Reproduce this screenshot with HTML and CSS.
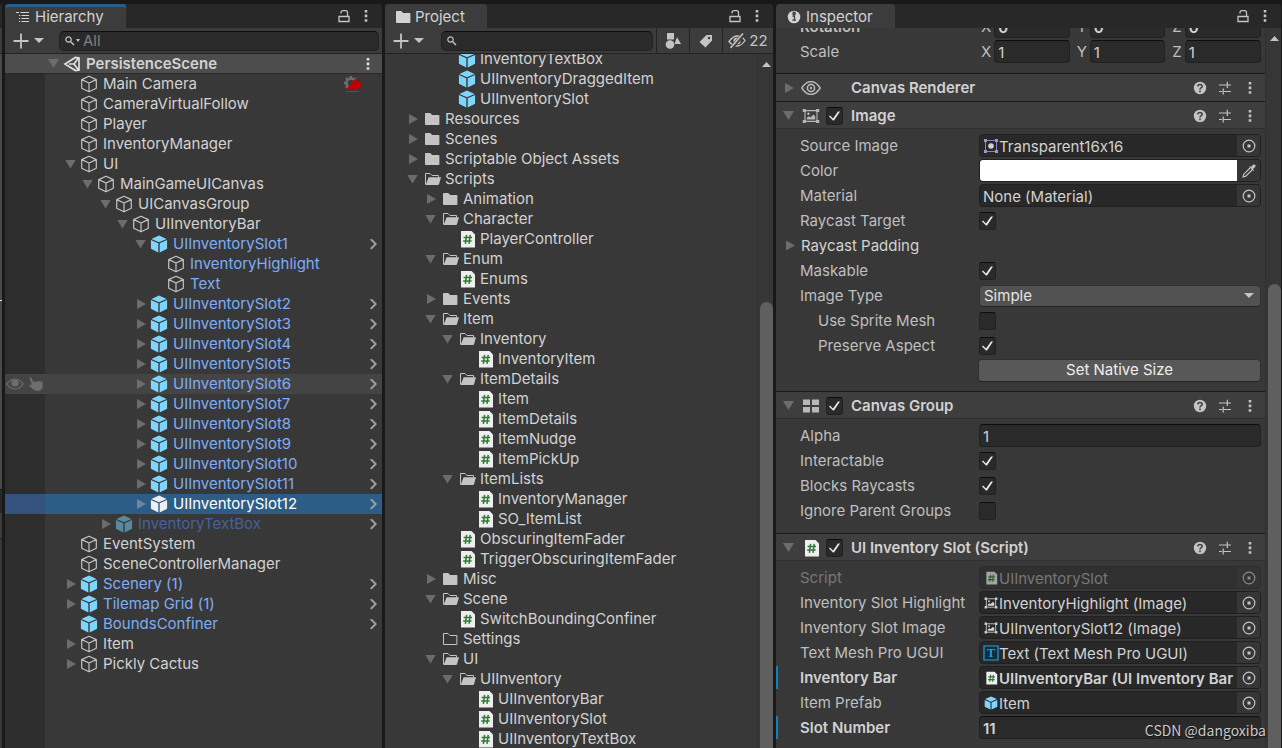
FILE: index.html
```html
<!DOCTYPE html>
<html lang="en">
<head>
<meta charset="utf-8">
<title>PersistenceScene</title>
<link rel="stylesheet" href="styles.css">
</head>
<body>
<svg class="defs" aria-hidden="true">
  <symbol id="cube" viewBox="0 0 18 18"><path d="M9 1.2 16.3 4.6V13.2L9 16.8 1.7 13.2V4.6ZM1.7 4.6 9 8 16.3 4.6M9 8V16.8" fill="none" stroke="currentColor" stroke-width="1.2" stroke-linejoin="round"/></symbol>
  <symbol id="prefab" viewBox="0 0 18 18"><path d="M9 .6 16.6 3.9 9 7.3 1.4 3.9ZM.9 5 8.3 8.3V17.4L.9 13.8ZM17.1 5 9.7 8.3V17.4L17.1 13.8Z" fill="currentColor"/></symbol>
  <symbol id="folder" viewBox="0 0 18 18"><path d="M2 3.8Q2 3 2.8 3H7.2L9.2 5H15.6Q16.4 5 16.4 5.8V14.2Q16.4 15 15.6 15H2.8Q2 15 2 14.2Z" fill="currentColor"/></symbol>
  <symbol id="folder-open" viewBox="0 0 18 18"><path d="M2.5 14.5V3.5H7L9 5.5H15.5V7.5" fill="none" stroke="currentColor"/><path d="M5.6 7.2H18L16 14.2Q15.8 15 15 15H2.6Z" fill="currentColor"/></symbol>
  <symbol id="folder-empty" viewBox="0 0 18 18"><path d="M2.5 14.5V3.5H7L9 5.5H15.9V14.5Z" fill="none" stroke="currentColor"/></symbol>
  <symbol id="script" viewBox="0 0 18 18"><path d="M3 1H13.5L17 4.5V17.4H3Z" fill="#eeeeee"/><path d="M8.6 4.8 7.4 13.8M12.2 4.8 11 13.8M5.6 7.6H14M5.2 11H13.6" fill="none" stroke="#2e7a35" stroke-width="1.5"/></symbol>
  <symbol id="search" viewBox="0 0 12 12"><circle cx="4.500" cy="4.500" r="2.700" fill="none" stroke="currentColor" stroke-width="1.200"/><path d="M6.500 6.500 10 10" stroke="currentColor" stroke-width="1.500"/></symbol>
  <symbol id="lock" viewBox="0 0 12 14"><path d="M1 7.5H11V12.5H1ZM3 4.6V3.8Q3 1.7 5 1.7H7.6Q9.5 1.7 9.5 3.8V7.5" fill="none" stroke="currentColor" stroke-width="1.3"/></symbol>
  <symbol id="dots" viewBox="0 0 4 14"><path d="M.7 1H3.3V3.6H.7ZM.7 5.6H3.3V8.2H.7ZM.7 10.2H3.3V12.8H.7Z" fill="currentColor"/></symbol>
  <symbol id="plus" viewBox="0 0 16 16"><path d="M8 .5V15.5M.5 8H15.5" stroke="currentColor" stroke-width="1.8"/></symbol>
  <symbol id="eye" viewBox="0 0 20 14"><path d="M.8 7Q5 .5 10 .5T19.2 7Q15 13.500 10 13.500T.8 7Z" fill="none" stroke="currentColor" stroke-width="1.4"/><circle cx="10" cy="7" r="3.6" fill="none" stroke="currentColor" stroke-width="1.6"/><circle cx="10" cy="7" r="1.2" fill="currentColor"/></symbol>
  <symbol id="eye-full" viewBox="0 0 18 12"><path d="M.7 6Q4.5 1 9 1T17.3 6Q13.500 11 9 11T.7 6Z" fill="none" stroke="currentColor" stroke-width="1.2"/><circle cx="9" cy="5" r="3.6" fill="currentColor"/></symbol>
  <symbol id="hand" viewBox="0 0 16 16"><path d="M1.200 1.400Q2.400.6 3.200 2L6 6.400 7.500 5 9 6 10.500 4.800 12 5.800 13.600 5 14.600 6.400V11.500L12 14.700H7.500L4.800 13 1 9.500Q1.500 8.200 3.200 8.600L4.200 9Z" fill="currentColor"/></symbol>
  <symbol id="image" viewBox="0 0 18 16"><path d="M3 2.600H15V13.400H3Z" fill="none" stroke="currentColor" stroke-width="1.100"/><path d="M.8 1H3.800V4H.8ZM14.200 1H17.200V4H14.200ZM.8 12H3.800V15H.8ZM14.200 12H17.200V15H14.200ZM4.800 11.400V9.800L7 8.200 8.500 9.400 11.500 6.400 13.200 8.400V11.400Z" fill="currentColor"/><circle cx="6.400" cy="5.800" r="1.200" fill="currentColor"/></symbol>
  <symbol id="help" viewBox="0 0 14 14"><circle cx="7" cy="7" r="6.200" fill="currentColor"/><path d="M4.800 5.400Q4.900 3.500 7 3.500T9.200 5.300Q9.200 6.300 8 6.900 7 7.400 7 8.500M7 9.600V11.200" fill="none" stroke="#3e3e3e" stroke-width="1.600"/></symbol>
  <symbol id="sliders" viewBox="0 0 14 14"><path d="M1 4H8M8 4H13M9.300.8V7M1 10.500H4M5.200 10.500H13M5.200 7.500V13.500" fill="none" stroke="currentColor" stroke-width="1.200"/></symbol>
  <symbol id="target" viewBox="0 0 14 14"><circle cx="7" cy="7" r="5.800" fill="none" stroke="currentColor" stroke-width="1.200"/><path d="M5.500 5.500H8.500V8.500H5.500Z" fill="currentColor"/></symbol>
</svg>

<div class="editor">
  <div class="strip" aria-hidden="true"><i class="strip-tab"></i><i class="strip-bar"></i><i class="strip-view"></i><i class="strip-line"></i><i class="strip-view grow"></i><i class="strip-tab split"></i><i class="strip-bar"></i><i class="strip-rest"></i></div>

  <section class="panel">
    <header class="tabs">
      <button class="tab active"><svg class="i16" viewBox="0 0 16 16"><path d="M1 3.500H4M5.500 3.500H14M6.500 6.500H14M6.500 9.500H14M6.500 12.500H14M4 6.500H5.200M4 9.500H5.200M4 12.500H5.200" stroke="currentColor"/></svg>Hierarchy</button>
      <button class="ic" aria-label="Lock"><svg class="lock"><use href="#lock"/></svg></button>
      <button class="ic" aria-label="Menu"><svg class="dots"><use href="#dots"/></svg></button>
    </header>
    <div class="toolbar">
      <button class="add" aria-label="Add"><svg class="i16"><use href="#plus"/></svg><i class="caret"></i></button>
      <label class="search"><svg class="i12"><use href="#search"/></svg><i class="caret small"></i><input type="text" placeholder="All" aria-label="Search hierarchy"></label>
    </div>
    <ul class="tree hier">
      <li class="scene l0"><button class="fold open" aria-label="Fold"></button><svg class="i18" viewBox="0 0 18 18"><path d="M2 9 12.500 2.500 16 3V15L12.500 15.500ZM6 9H11L15 3.500M11 9 15 14.500" fill="none" stroke="currentColor" stroke-width="1.700"/></svg><b>PersistenceScene</b><button class="ic end" aria-label="Scene menu"><svg class="dots"><use href="#dots"/></svg></button></li>
      <li class="l1 leaf"><svg class="i18"><use href="#cube"/></svg>Main Camera<svg class="brain" viewBox="0 0 20 18"><circle cx="8" cy="8" r="4.500" fill="none" stroke="#6e6e6e" stroke-width="2.500"/><path d="M8 1V4M1 8H4M3 3 5 5M3 13 5 11M11 5 13 3" stroke="#6e6e6e" stroke-width="2.400"/><path d="M2.500 15 12.500 3.500 15 4V8L18 6.500V12.500L15.500 11.500V15Z" fill="#c00000"/><path d="M3 16.500H15.500" stroke="#6a4a4a"/></svg></li>
      <li class="l1 leaf"><svg class="i18"><use href="#cube"/></svg>CameraVirtualFollow</li>
      <li class="l1 leaf"><svg class="i18"><use href="#cube"/></svg>Player</li>
      <li class="l1 leaf"><svg class="i18"><use href="#cube"/></svg>InventoryManager</li>
      <li class="l1"><button class="fold open" aria-label="Fold"></button><svg class="i18"><use href="#cube"/></svg>UI</li>
      <li class="l2"><button class="fold open" aria-label="Fold"></button><svg class="i18"><use href="#cube"/></svg>MainGameUICanvas</li>
      <li class="l3"><button class="fold open" aria-label="Fold"></button><svg class="i18"><use href="#cube"/></svg>UICanvasGroup</li>
      <li class="l4"><button class="fold open" aria-label="Fold"></button><svg class="i18"><use href="#cube"/></svg>UIInventoryBar</li>
      <li class="l5 pf"><button class="fold open" aria-label="Fold"></button><svg class="i18"><use href="#prefab"/></svg>UIInventorySlot1<button class="go" aria-label="Open prefab"></button></li>
      <li class="l6 leaf child"><svg class="i18"><use href="#cube"/></svg>InventoryHighlight</li>
      <li class="l6 leaf child"><svg class="i18"><use href="#cube"/></svg>Text</li>
      <li class="l5 pf"><button class="fold" aria-label="Unfold"></button><svg class="i18"><use href="#prefab"/></svg>UIInventorySlot2<button class="go" aria-label="Open prefab"></button></li>
      <li class="l5 pf"><button class="fold" aria-label="Unfold"></button><svg class="i18"><use href="#prefab"/></svg>UIInventorySlot3<button class="go" aria-label="Open prefab"></button></li>
      <li class="l5 pf"><button class="fold" aria-label="Unfold"></button><svg class="i18"><use href="#prefab"/></svg>UIInventorySlot4<button class="go" aria-label="Open prefab"></button></li>
      <li class="l5 pf"><button class="fold" aria-label="Unfold"></button><svg class="i18"><use href="#prefab"/></svg>UIInventorySlot5<button class="go" aria-label="Open prefab"></button></li>
      <li class="l5 pf hover"><span class="vis"><svg class="eye-s"><use href="#eye-full"/></svg><svg class="i16"><use href="#hand"/></svg></span><button class="fold" aria-label="Unfold"></button><svg class="i18"><use href="#prefab"/></svg>UIInventorySlot6<button class="go" aria-label="Open prefab"></button></li>
      <li class="l5 pf"><button class="fold" aria-label="Unfold"></button><svg class="i18"><use href="#prefab"/></svg>UIInventorySlot7<button class="go" aria-label="Open prefab"></button></li>
      <li class="l5 pf"><button class="fold" aria-label="Unfold"></button><svg class="i18"><use href="#prefab"/></svg>UIInventorySlot8<button class="go" aria-label="Open prefab"></button></li>
      <li class="l5 pf"><button class="fold" aria-label="Unfold"></button><svg class="i18"><use href="#prefab"/></svg>UIInventorySlot9<button class="go" aria-label="Open prefab"></button></li>
      <li class="l5 pf"><button class="fold" aria-label="Unfold"></button><svg class="i18"><use href="#prefab"/></svg>UIInventorySlot10<button class="go" aria-label="Open prefab"></button></li>
      <li class="l5 pf"><button class="fold" aria-label="Unfold"></button><svg class="i18"><use href="#prefab"/></svg>UIInventorySlot11<button class="go" aria-label="Open prefab"></button></li>
      <li class="l5 pf selected"><button class="fold" aria-label="Unfold"></button><svg class="i18"><use href="#prefab"/></svg>UIInventorySlot12<button class="go" aria-label="Open prefab"></button></li>
      <li class="l3 pf inactive"><button class="fold" aria-label="Unfold"></button><svg class="i18"><use href="#prefab"/></svg>InventoryTextBox<button class="go" aria-label="Open prefab"></button></li>
      <li class="l1 leaf"><svg class="i18"><use href="#cube"/></svg>EventSystem</li>
      <li class="l1 leaf"><svg class="i18"><use href="#cube"/></svg>SceneControllerManager</li>
      <li class="l1 pf"><button class="fold" aria-label="Unfold"></button><svg class="i18"><use href="#prefab"/></svg>Scenery (1)<button class="go" aria-label="Open prefab"></button></li>
      <li class="l1 pf"><button class="fold" aria-label="Unfold"></button><svg class="i18"><use href="#prefab"/></svg>Tilemap Grid (1)<button class="go" aria-label="Open prefab"></button></li>
      <li class="l1 leaf pf"><svg class="i18"><use href="#prefab"/></svg>BoundsConfiner<button class="go" aria-label="Open prefab"></button></li>
      <li class="l1"><button class="fold" aria-label="Unfold"></button><svg class="i18"><use href="#cube"/></svg>Item</li>
      <li class="l1"><button class="fold" aria-label="Unfold"></button><svg class="i18"><use href="#cube"/></svg>Pickly Cactus</li>
    </ul>
  </section>

  <section class="panel">
    <header class="tabs">
      <button class="tab"><svg class="i16" viewBox="1 1 16 16"><use href="#folder" width="18" height="18"/></svg>Project</button>
      <button class="ic" aria-label="Lock"><svg class="lock"><use href="#lock"/></svg></button>
      <button class="ic" aria-label="Menu"><svg class="dots"><use href="#dots"/></svg></button>
    </header>
    <div class="toolbar project-bar">
      <button class="add" aria-label="Add"><svg class="i16"><use href="#plus"/></svg><i class="caret"></i></button>
      <label class="search"><svg class="i12"><use href="#search"/></svg><input type="text" aria-label="Search project"></label>
      <button class="filter" aria-label="Search by type"><svg class="i16" viewBox="0 0 16 16"><path d="M2 0H9V6.500H2ZM12 4 16 11H9.500Z" fill="currentColor"/><circle cx="5" cy="11.500" r="4.300" fill="currentColor"/></svg></button>
      <button class="filter" aria-label="Search by label"><svg class="i16" viewBox="0 0 16 16"><path d="M8.500 2H14V7.500L7.500 14.500 1.500 9Z" fill="currentColor"/><circle cx="11" cy="5" r="1.200" fill="#3c3c3c"/></svg></button>
      <button class="filter count"><svg class="i18" viewBox="0 0 18 18"><path d="M1 9.500Q5 4 9.500 4T17 8.500Q13.500 14 9 14T1 9.500Z" fill="none" stroke="currentColor" stroke-width="1.300"/><circle cx="9" cy="9" r="3.500" fill="currentColor"/><path d="M3 16.500 15.500 2" stroke="#3c3c3c" stroke-width="4"/><path d="M2.500 16 15 1.500" stroke="currentColor" stroke-width="1.600"/></svg>22</button>
    </div>
    <div class="scroller">
      <ul class="tree proj">
        <li class="l3 leaf asset"><svg class="i18"><use href="#prefab"/></svg>InventoryTextBox</li>
        <li class="l3 leaf asset"><svg class="i18"><use href="#prefab"/></svg>UIInventoryDraggedItem</li>
        <li class="l3 leaf asset"><svg class="i18"><use href="#prefab"/></svg>UIInventorySlot</li>
        <li class="l1"><button class="fold" aria-label="Unfold"></button><svg class="i18"><use href="#folder"/></svg>Resources</li>
        <li class="l1"><button class="fold" aria-label="Unfold"></button><svg class="i18"><use href="#folder"/></svg>Scenes</li>
        <li class="l1"><button class="fold" aria-label="Unfold"></button><svg class="i18"><use href="#folder"/></svg>Scriptable Object Assets</li>
        <li class="l1"><button class="fold open" aria-label="Fold"></button><svg class="i18"><use href="#folder-open"/></svg>Scripts</li>
        <li class="l2"><button class="fold" aria-label="Unfold"></button><svg class="i18"><use href="#folder"/></svg>Animation</li>
        <li class="l2"><button class="fold open" aria-label="Fold"></button><svg class="i18"><use href="#folder-open"/></svg>Character</li>
        <li class="l3 leaf"><svg class="i18"><use href="#script"/></svg>PlayerController</li>
        <li class="l2"><button class="fold open" aria-label="Fold"></button><svg class="i18"><use href="#folder-open"/></svg>Enum</li>
        <li class="l3 leaf"><svg class="i18"><use href="#script"/></svg>Enums</li>
        <li class="l2"><button class="fold" aria-label="Unfold"></button><svg class="i18"><use href="#folder"/></svg>Events</li>
        <li class="l2"><button class="fold open" aria-label="Fold"></button><svg class="i18"><use href="#folder-open"/></svg>Item</li>
        <li class="l3"><button class="fold open" aria-label="Fold"></button><svg class="i18"><use href="#folder-open"/></svg>Inventory</li>
        <li class="l4 leaf"><svg class="i18"><use href="#script"/></svg>InventoryItem</li>
        <li class="l3"><button class="fold open" aria-label="Fold"></button><svg class="i18"><use href="#folder-open"/></svg>ItemDetails</li>
        <li class="l4 leaf"><svg class="i18"><use href="#script"/></svg>Item</li>
        <li class="l4 leaf"><svg class="i18"><use href="#script"/></svg>ItemDetails</li>
        <li class="l4 leaf"><svg class="i18"><use href="#script"/></svg>ItemNudge</li>
        <li class="l4 leaf"><svg class="i18"><use href="#script"/></svg>ItemPickUp</li>
        <li class="l3"><button class="fold open" aria-label="Fold"></button><svg class="i18"><use href="#folder-open"/></svg>ItemLists</li>
        <li class="l4 leaf"><svg class="i18"><use href="#script"/></svg>InventoryManager</li>
        <li class="l4 leaf"><svg class="i18"><use href="#script"/></svg>SO_ItemList</li>
        <li class="l3 leaf"><svg class="i18"><use href="#script"/></svg>ObscuringItemFader</li>
        <li class="l3 leaf"><svg class="i18"><use href="#script"/></svg>TriggerObscuringItemFader</li>
        <li class="l2"><button class="fold" aria-label="Unfold"></button><svg class="i18"><use href="#folder"/></svg>Misc</li>
        <li class="l2"><button class="fold open" aria-label="Fold"></button><svg class="i18"><use href="#folder-open"/></svg>Scene</li>
        <li class="l3 leaf"><svg class="i18"><use href="#script"/></svg>SwitchBoundingConfiner</li>
        <li class="l2 leaf"><svg class="i18"><use href="#folder-empty"/></svg>Settings</li>
        <li class="l2"><button class="fold open" aria-label="Fold"></button><svg class="i18"><use href="#folder-open"/></svg>UI</li>
        <li class="l3"><button class="fold open" aria-label="Fold"></button><svg class="i18"><use href="#folder-open"/></svg>UIInventory</li>
        <li class="l4 leaf"><svg class="i18"><use href="#script"/></svg>UIInventoryBar</li>
        <li class="l4 leaf"><svg class="i18"><use href="#script"/></svg>UIInventorySlot</li>
        <li class="l4 leaf"><svg class="i18"><use href="#script"/></svg>UIInventoryTextBox</li>
      </ul>
      <div class="bar"><i class="up"></i><i class="thumb"></i></div>
    </div>
  </section>

  <section class="panel inspector">
    <header class="tabs">
      <button class="tab"><svg class="i16" viewBox="0 0 16 16"><circle cx="8" cy="8" r="6.300" fill="currentColor"/><path d="M6.500 7H8.500V11M6.300 11.200H10M7.200 3.500H9V5.300H7.200Z" fill="none" stroke="#3c3c3c" stroke-width="1.300"/></svg>Inspector</button>
      <button class="ic" aria-label="Lock"><svg class="lock"><use href="#lock"/></svg></button>
      <button class="ic" aria-label="Menu"><svg class="dots"><use href="#dots"/></svg></button>
    </header>
    <div class="scroller">
      <div class="components">
        <div class="fields transform">
          <div class="field"><b>Rotation</b><div class="vec"><label>X<input type="text" class="strong" value="0"></label><label>Y<input type="text" class="strong" value="0"></label><label>Z<input type="text" class="strong" value="0"></label></div></div>
          <div class="field"><span>Scale</span><div class="vec"><label>X<input type="text" value="1"></label><label>Y<input type="text" value="1"></label><label>Z<input type="text" value="1"></label></div></div>
        </div>

        <div class="head plain"><button class="fold" aria-label="Unfold"></button><svg class="eye-l"><use href="#eye"/></svg><h2 class="no-check">Canvas Renderer</h2><button class="ic" aria-label="Help"><svg class="i14"><use href="#help"/></svg></button><button class="ic" aria-label="Presets"><svg class="i14"><use href="#sliders"/></svg></button><button class="ic" aria-label="Menu"><svg class="dots"><use href="#dots"/></svg></button></div>

        <div class="head"><button class="fold open" aria-label="Fold"></button><svg class="i18"><use href="#image"/></svg><input type="checkbox" id="c-image" checked><h2><label for="c-image">Image</label></h2><button class="ic" aria-label="Help"><svg class="i14"><use href="#help"/></svg></button><button class="ic" aria-label="Presets"><svg class="i14"><use href="#sliders"/></svg></button><button class="ic" aria-label="Menu"><svg class="dots"><use href="#dots"/></svg></button></div>
        <div class="fields image">
          <div class="field"><span>Source Image</span><div class="object"><svg class="i16" viewBox="0 0 16 16"><path d="M2.500 2.500H13.500V13.500H2.500Z" fill="none" stroke="#8f7cc8"/><path d="M1 1H4V4H1ZM12 1H15V4H12ZM1 12H4V15H1ZM12 12H15V15H12Z" fill="#a48fe0"/><circle cx="8" cy="8" r="2.800" fill="#d0d0d0"/></svg><span>Transparent16x16</span><button aria-label="Pick"><svg class="i14"><use href="#target"/></svg></button></div></div>
          <div class="field"><label for="f-color">Color</label><div class="object swatch"><input type="color" id="f-color" value="#ffffff"><button aria-label="Pick color"><svg class="i14" viewBox="0 0 14 14"><path d="M8 4 1.800 10.200 1 13 3.800 12.200 10 6" fill="none" stroke="currentColor" stroke-width="1.200"/><path d="M7 2.500 8.200 2.200 9 3 11 .8Q12.500 0 13.300 1T13 3.200L11 5 11.800 6 11.200 7.200Z" fill="currentColor"/></svg></button></div></div>
          <div class="field"><span>Material</span><div class="object"><span>None (Material)</span><button aria-label="Pick"><svg class="i14"><use href="#target"/></svg></button></div></div>
          <div class="field"><label for="f-ray">Raycast Target</label><input type="checkbox" id="f-ray" checked></div>
          <div class="field foldable"><button class="fold" aria-label="Unfold"></button><span>Raycast Padding</span></div>
          <div class="field"><label for="f-mask">Maskable</label><input type="checkbox" id="f-mask" checked></div>
          <div class="field"><label for="f-type">Image Type</label><div class="select"><select id="f-type"><option>Simple</option></select></div></div>
          <div class="field sub"><label for="f-mesh">Use Sprite Mesh</label><input type="checkbox" id="f-mesh"></div>
          <div class="field sub"><label for="f-aspect">Preserve Aspect</label><input type="checkbox" id="f-aspect" checked></div>
          <div class="field"><span></span><button class="push">Set Native Size</button></div>
        </div>

        <div class="head"><button class="fold open" aria-label="Fold"></button><svg class="i18" viewBox="0 0 18 18"><path d="M1 2.500H8V8H1ZM10 2.500H17V8H10ZM1 10H8V15.500H1ZM10 10H17V15.500H10Z" fill="currentColor"/></svg><input type="checkbox" id="c-group" checked><h2><label for="c-group">Canvas Group</label></h2><button class="ic" aria-label="Help"><svg class="i14"><use href="#help"/></svg></button><button class="ic" aria-label="Presets"><svg class="i14"><use href="#sliders"/></svg></button><button class="ic" aria-label="Menu"><svg class="dots"><use href="#dots"/></svg></button></div>
        <div class="fields">
          <div class="field"><label for="f-alpha">Alpha</label><input type="text" id="f-alpha" value="1"></div>
          <div class="field"><label for="f-inter">Interactable</label><input type="checkbox" id="f-inter" checked></div>
          <div class="field"><label for="f-block">Blocks Raycasts</label><input type="checkbox" id="f-block" checked></div>
          <div class="field"><label for="f-ignore">Ignore Parent Groups</label><input type="checkbox" id="f-ignore"></div>
        </div>

        <div class="head"><button class="fold open" aria-label="Fold"></button><svg class="i18"><use href="#script"/></svg><input type="checkbox" id="c-slot" checked><h2><label for="c-slot">UI Inventory Slot (Script)</label></h2><button class="ic" aria-label="Help"><svg class="i14"><use href="#help"/></svg></button><button class="ic" aria-label="Presets"><svg class="i14"><use href="#sliders"/></svg></button><button class="ic" aria-label="Menu"><svg class="dots"><use href="#dots"/></svg></button></div>
        <div class="fields">
          <div class="field disabled"><span>Script</span><div class="object"><svg class="i14"><use href="#script"/></svg><span>UIInventorySlot</span><button disabled aria-label="Pick"><svg class="i14"><use href="#target"/></svg></button></div></div>
          <div class="field"><span>Inventory Slot Highlight</span><div class="object"><svg class="i14"><use href="#image"/></svg><span>InventoryHighlight (Image)</span><button aria-label="Pick"><svg class="i14"><use href="#target"/></svg></button></div></div>
          <div class="field"><span>Inventory Slot Image</span><div class="object"><svg class="i14"><use href="#image"/></svg><span>UIInventorySlot12 (Image)</span><button aria-label="Pick"><svg class="i14"><use href="#target"/></svg></button></div></div>
          <div class="field"><span>Text Mesh Pro UGUI</span><div class="object"><svg class="i16" viewBox="0 0 16 16"><path d="M1 1H15V15H1Z" fill="#1c2a33" stroke="#12a5ec" stroke-width="1.200"/><text x="8" y="12" text-anchor="middle" class="tmp">T</text></svg><span>Text (Text Mesh Pro UGUI)</span><button aria-label="Pick"><svg class="i14"><use href="#target"/></svg></button></div></div>
          <div class="field changed"><b>Inventory Bar</b><div class="object"><svg class="i14"><use href="#script"/></svg><b>UIInventoryBar (UI Inventory Bar</b><button aria-label="Pick"><svg class="i14"><use href="#target"/></svg></button></div></div>
          <div class="field"><span>Item Prefab</span><div class="object"><svg class="i14 blue"><use href="#prefab"/></svg><span>Item</span><button aria-label="Pick"><svg class="i14"><use href="#target"/></svg></button></div></div>
          <div class="field changed"><label for="f-slot"><b>Slot Number</b></label><input type="text" class="strong" id="f-slot" value="11"></div>
        </div>
      </div>
      <div class="bar"><i class="up"></i><i class="thumb"></i></div>
    </div>
  </section>
</div>
<div class="watermark">CSDN @dangoxiba</div>
</body>
</html>
```

FILE: styles.css
```css
* { box-sizing: border-box; }

body {
  margin: 0;
  height: 100vh;
  overflow: hidden;
  background: #191919;
  color: #d2d2d2;
  font: 15px/20px Inter, "Liberation Sans", sans-serif;
  font-feature-settings: "calt" 0;
}

button, input, select {
  margin: 0;
  padding: 0;
  border: 0;
  background: none;
  color: inherit;
  font: inherit;
}

svg { flex: none; display: block; overflow: visible; }
i { display: block; flex: none; }
b { font-weight: 600; }
ul { margin: 0; padding: 0; list-style: none; }

.defs { position: absolute; width: 0; height: 0; }
.i12 { width: 12px; height: 12px; }
.i14 { width: 14px; height: 14px; }
.i16 { width: 16px; height: 16px; }
.i18 { width: 18px; height: 18px; }
.lock { width: 12px; height: 14px; }
.dots { width: 4px; height: 14px; }
.eye-s { width: 18px; height: 12px; }
.eye-l { width: 20px; height: 14px; }

.editor {
  display: grid;
  grid-template-columns: 2px minmax(0, 377fr) minmax(0, 388fr) minmax(0, 506fr);
  column-gap: 3px;
  height: 100vh;
  padding-top: 4px;
}

/* Edge of the neighbouring view */
.strip { display: flex; flex-direction: column; }
.strip-tab { height: 24px; background: #282828; }
.strip-tab.split { border-top: 1px solid #191919; }
.strip-bar { height: 26px; background: #3c3c3c; border-bottom: 1px solid #232323; }
.strip-view { height: 246px; background: #494949; }
.strip-view.grow { height: 188px; }
.strip-line { height: 1px; background: #fff; }
.strip-rest { flex: 1; background: #383838; }

.panel {
  display: flex;
  flex-direction: column;
  min-width: 0;
  min-height: 0;
  overflow: hidden;
  background: #383838;
  border-radius: 4px 4px 0 0;
}

.tabs { display: flex; align-items: center; flex: none; height: 24px; padding-right: 5px; background: #282828; }
.tab {
  display: flex;
  align-items: center;
  gap: 4px;
  align-self: stretch;
  margin-right: auto;
  padding: 2px 22px 0 10px;
  background: #3c3c3c;
  border-radius: 3px 3px 0 0;
}
.tab.active { box-shadow: inset 0 3px #2c5d87; }
.ic { display: flex; align-items: center; justify-content: center; width: 24px; color: #c4c4c4; }
.tabs .ic { width: 22px; }

.toolbar {
  display: flex;
  align-items: center;
  flex: none;
  height: 26px;
  padding: 0 3px 0 8px;
  background: #3c3c3c;
  border-bottom: 1px solid #232323;
}
.project-bar { padding-right: 0; }
.add { display: flex; align-items: center; gap: 5px; width: 46px; color: #c4c4c4; }
.caret { width: 10px; height: 5px; background: #c4c4c4; clip-path: polygon(0 0, 100% 0, 50% 100%); }
.caret.small { width: 4px; height: 3px; }
.search {
  display: flex;
  align-items: center;
  flex: 1;
  min-width: 0;
  height: 20px;
  padding-left: 4px;
  color: #c4c4c4;
  background: #2a2a2a;
  border: 1px solid #212121;
  border-top-color: #0d0d0d;
  border-radius: 5px;
}
.project-bar .search { margin: 0 3px 0 2px; }
.search input { flex: 1; min-width: 0; margin-left: 3px; }
.search input::placeholder { color: #7f7f7f; opacity: 1; }
.filter {
  display: flex;
  align-items: center;
  justify-content: center;
  gap: 3px;
  align-self: stretch;
  width: 33px;
  border-left: 1px solid #232323;
  color: #c4c4c4;
}
.filter.count { width: 51px; }

/* Trees */
.tree li { display: flex; align-items: center; height: 20px; white-space: nowrap; }
.tree svg { color: #c4c4c4; }
.fold { flex: none; width: 9px; height: 10px; margin: 0 3px 0 2px; background: #6c6c6c; clip-path: polygon(0 0, 100% 50%, 0 100%); }
.fold.open { width: 11px; height: 9px; margin: 0 3px 0 0; clip-path: polygon(0 0, 100% 0, 50% 100%); }

.hier { flex: 1; background: linear-gradient(90deg, #2d2d2d 40px, #383838 40px); }
.hier .i18 { margin: 0 5px 0 1px; }
.hier .l0 { padding-left: 43px; }
.hier .l1 { padding-left: 60px; }
.hier .l2 { padding-left: 77px; }
.hier .l3 { padding-left: 95px; }
.hier .l4 { padding-left: 112px; }
.hier .l5 { padding-left: 130px; }
.hier .l6 { padding-left: 147px; }
.tree .leaf::before { content: ""; width: 14px; }
.hier .scene { background: #4d4d4d; border-bottom: 1px solid #2a2a2a; }
.scene svg { color: #e0e0e0; }
.end { margin-left: auto; margin-right: 2px; }
.hier .brain { width: 20px; height: 18px; margin-left: auto; margin-right: 19px; }
.pf, .child { color: #7fadf5; }
.pf svg { color: #7fd6fd; }
.hover { position: relative; background: #444444; }
.vis { position: absolute; left: 1px; display: flex; align-items: center; gap: 4px; }
.hover .vis svg { margin: 0; color: #6e6e6e; }
.selected { background: linear-gradient(90deg, #34527d 40px, #2c5d87 40px); color: #fff; }
.selected svg { color: #f0eff0; }
.selected .fold { background: #6a86a4; }
.inactive { color: #46629a; }
.inactive svg { color: #588a9f; }
.go { width: 7px; height: 11px; margin-left: auto; margin-right: 5px; background: #a0a0a0; clip-path: polygon(0 12%, 22% 0, 100% 50%, 22% 100%, 0 88%, 62% 50%); }

.scroller { display: flex; flex: 1; min-height: 0; overflow: hidden; }
.proj { flex: 1; min-width: 0; margin-top: -5px; }
.proj .i18 { margin-left: 2px; margin-right: 4px; }
.proj .l1 { padding-left: 22px; }
.proj .l2 { padding-left: 40px; }
.proj .l3 { padding-left: 57px; }
.proj .l4 { padding-left: 75px; }
.proj .l3.leaf svg, .proj .l4.leaf svg { margin-left: 2px; }
.proj .asset svg { color: #7fd6fd; }

.bar { display: flex; flex-direction: column; flex: none; align-items: flex-end; width: 16px; background: #363636; border-left: 1px solid #2f2f2f; }
.up { width: 9px; height: 5px; margin: 8px 2px 0 0; background: #c4c4c4; clip-path: polygon(50% 0, 100% 100%, 0 100%); }
.thumb { flex: 1; width: 13px; margin-top: 235px; background: #5f5f5f; border-radius: 7px 7px 0 0; }

/* Inspector */
.inspector { border-right: 1px solid #191919; }
.inspector .thumb { margin-top: 243px; }
.components { flex: 1; min-width: 0; }
.head {
  display: flex;
  align-items: center;
  height: 28px;
  padding: 1px 3px 0 7px;
  background: #3e3e3e;
  border-top: 1px solid #1a1a1a;
  border-bottom: 1px solid #303030;
}
.head.plain { border-bottom: 0; }
.head > svg { margin-left: 5px; color: #b8b8b8; }
.head .eye-l { margin-left: 4px; margin-right: -1px; }
.head input { margin-left: 6px; }
.head .ic { width: 25px; }
.head h2 { flex: 1; margin: 0 0 0 8px; font-size: 15px; font-weight: 600; white-space: nowrap; }
.head h2.no-check { margin-left: 31px; }

.fields { display: flex; flex-direction: column; gap: 2px; padding: 5px 4px 11px 0; }
.fields.image { padding-bottom: 9px; }
.transform { margin-top: -18px; padding-bottom: 10px; }
.field {
  display: grid;
  grid-template-columns: minmax(0, 178fr) minmax(0, 282fr);
  column-gap: 1px;
  align-items: center;
  height: 23px;
  padding-left: 24px;
  color: #bfbfbf;
  white-space: nowrap;
}
.field.sub > label { padding-left: 18px; }
.field.foldable { display: flex; padding-left: 8px; color: #d2d2d2; }
.foldable .fold { margin-right: 5px; }
.field.changed { padding-left: 22px; border-left: 2px solid #1080c0; color: #d0d0d0; }
.field.disabled { color: #777; }

input[type="text"] { color: #d2d2d2; }
.field input[type="text"] {
  width: 100%;
  height: 23px;
  min-width: 0;
  padding: 1px 3px 0;
  background: #2a2a2a;
  border: 1px solid #212121;
  border-top-color: #0d0d0d;
  border-radius: 4px;
}
.field input.strong { font-weight: 600; }
.vec { display: flex; gap: 7px; padding-left: 2px; }
.vec label { display: flex; align-items: center; flex: 1; gap: 3px; min-width: 0; }
.vec input { flex: 1; }

input[type="checkbox"] {
  flex: none;
  appearance: none;
  width: 17px;
  height: 18px;
  background: #2a2a2a;
  border: 1px solid #212121;
  border-top-color: #0d0d0d;
  border-radius: 3px;
}
input[type="checkbox"]:checked::before {
  content: "";
  display: block;
  width: 15px;
  height: 16px;
  background: #e8e8e8;
  clip-path: polygon(2px 9px, 3px 8px, 6px 11px, 11px 4px, 13px 4px, 7px 13px, 6px 13px);
}

.object {
  display: flex;
  align-items: center;
  height: 23px;
  padding-left: 3px;
  background: #282828;
  border: 1px solid #202020;
  border-radius: 4px;
  overflow: hidden;
  color: #d2d2d2;
}
.object > .i14 { margin: 0 1px; }
.object span, .object b { flex: 1; min-width: 0; margin-top: 2px; overflow: hidden; }
.object button {
  display: flex;
  align-items: center;
  justify-content: center;
  align-self: stretch;
  flex: none;
  width: 23px;
  background: #363636;
  color: #c4c4c4;
}
.object .blue { color: #7fd6fd; }
.object.swatch { padding: 0; }
.swatch input { flex: 1; min-width: 0; height: 21px; appearance: none; }
.swatch input::-webkit-color-swatch-wrapper { padding: 0; }
.swatch input::-webkit-color-swatch { border: 0; border-radius: 0; }
.disabled .object { background: #303030; border-color: #2c2c2c; color: #777; }
.disabled .object svg { opacity: 0.6; }
.disabled .object button { background: #343434; }
.tmp { font: bold 12px "Liberation Serif", serif; fill: #12a5ec; }

.select {
  display: grid;
  grid-template-columns: 1fr auto;
  align-items: center;
  height: 22px;
  padding-right: 6px;
  background: #515151;
  border: 1px solid #303030;
  border-bottom-color: #242424;
  border-radius: 4px;
  color: #e4e4e4;
}
.select::after { content: ""; width: 10px; height: 5px; background: #c4c4c4; clip-path: polygon(0 0, 100% 0, 50% 100%); }
.select select { appearance: none; padding-left: 4px; }
.push {
  height: 23px;
  margin-left: -1px;
  padding-bottom: 2px;
  background: #585858;
  border: 1px solid #303030;
  border-bottom-color: #242424;
  border-radius: 4px;
  color: #eee;
}

.watermark {
  position: absolute;
  right: 16px;
  bottom: 8px;
  color: #c8c8c8;
  font: 14px/20px "Noto Sans CJK SC", sans-serif;
  text-shadow: 1px 1px 1px #111;
}
```
